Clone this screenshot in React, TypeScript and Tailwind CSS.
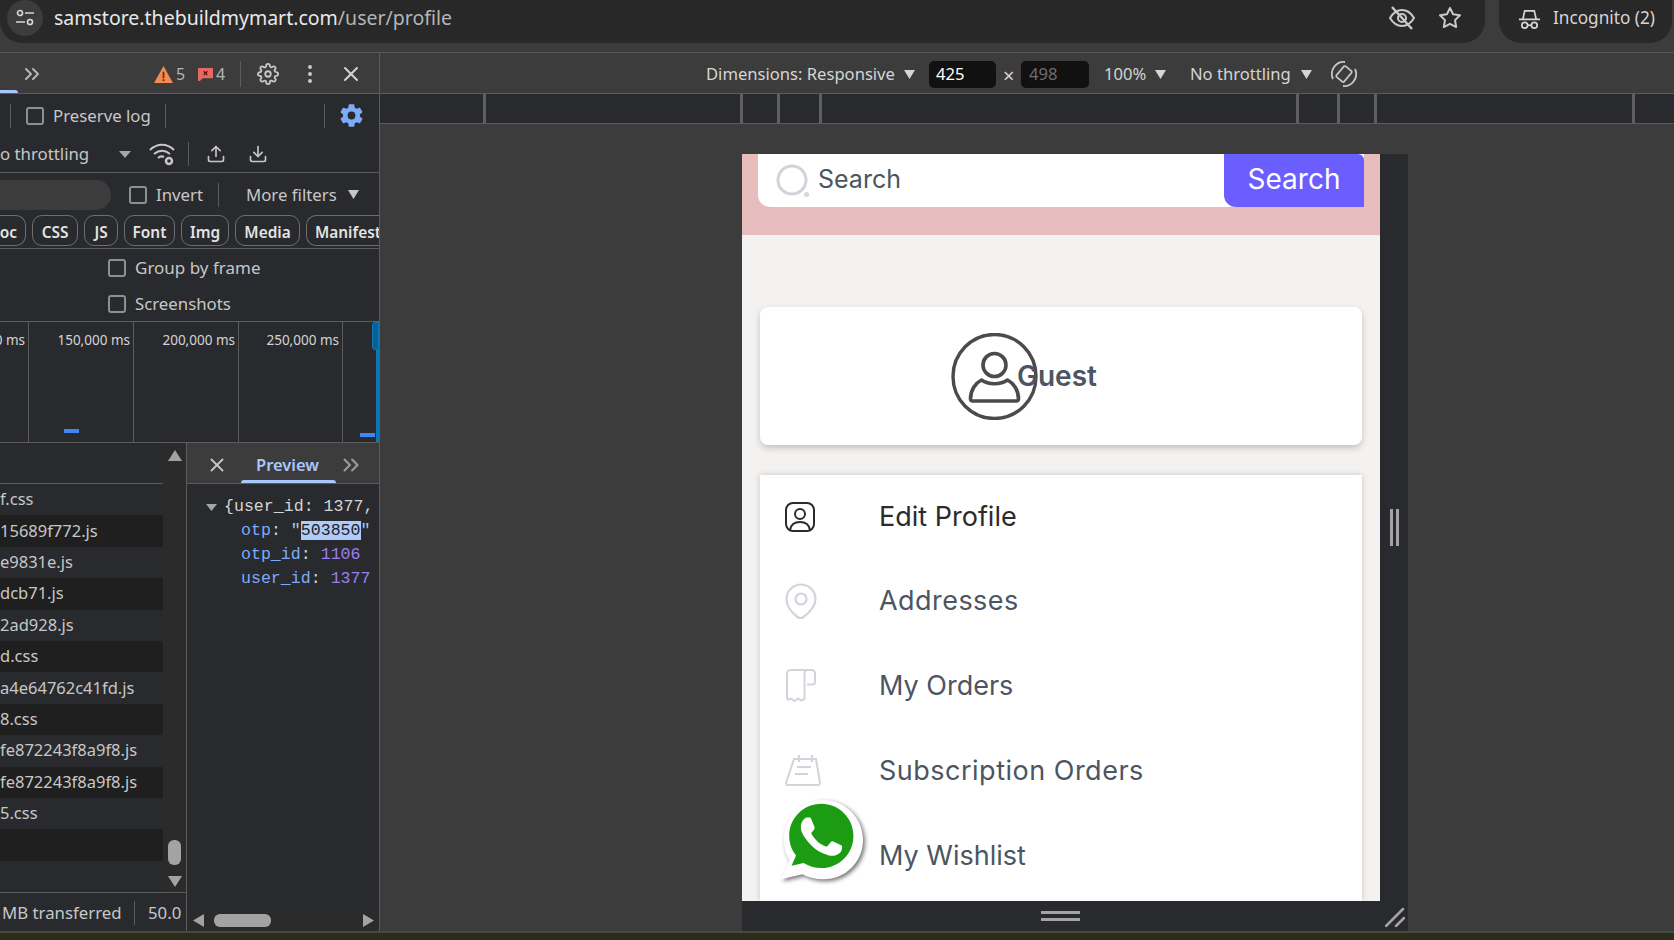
import React from 'react';
import { FiX, FiMoreVertical, FiChevronsRight, FiSettings, FiStar, FiUpload, FiDownload } from 'react-icons/fi';
import { IoSettingsSharp } from 'react-icons/io5';

const Caret = ({ className = 'w-[11px] h-[9px] text-[#c7c7c7]' }: { className?: string }) => (
  <svg viewBox="0 0 12 10" preserveAspectRatio="none" className={className}>
    <polygon points="0,0 12,0 6,10" fill="currentColor" />
  </svg>
);

const Check = () => <div className="w-[18px] h-[18px] shrink-0 rounded-[3px] border-2 border-[#8f8f8f]" />;
const Divider = ({ className = 'h-[24px]' }: { className?: string }) => <div className={`w-px shrink-0 bg-[#5c5c5c] ${className}`} />;

const chips = [
  { label: 'oc', className: 'w-[26px] rounded-r-[10px] border-l-0 justify-end pr-[8px]' },
  { label: 'CSS', className: 'w-[46px] ml-[6px] rounded-[10px] justify-center' },
  { label: 'JS', className: 'w-[34px] ml-[6px] rounded-[10px] justify-center' },
  { label: 'Font', className: 'w-[51px] ml-[6px] rounded-[10px] justify-center' },
  { label: 'Img', className: 'w-[48px] ml-[6px] rounded-[10px] justify-center' },
  { label: 'Media', className: 'w-[65px] ml-[6px] rounded-[10px] justify-center' },
  { label: 'Manifest', className: 'w-[73px] ml-[6px] rounded-l-[10px] border-r-0 pl-[8px]' },
];

const files = [
  'f.css',
  '15689f772.js',
  'e9831e.js',
  'dcb71.js',
  '2ad928.js',
  'd.css',
  'a4e64762c41fd.js',
  '8.css',
  'fe872243f8a9f8.js',
  'fe872243f8a9f8.js',
  '5.css',
  '',
  '',
];

const rulerTicks = ['w-[106px]', 'w-[257px]', 'w-[37px]', 'w-[42px]', 'w-[477px]', 'w-[41px]', 'w-[37px]', 'w-[258px]'];

const BrowserBar = () => (
  <div className="h-[53px] shrink-0 flex justify-between border-b border-[#565656] font-['Noto_Sans',sans-serif]">
    <div className="w-[1485px] h-[43px] bg-[#282828] rounded-b-[22px] flex items-center pl-[7px] pb-[7px]">
      <div className="w-[36px] h-[36px] rounded-full bg-[#3c3c3c] flex items-center justify-center">
        <svg viewBox="0 0 20 20" className="w-[20px] h-[20px]" fill="none" stroke="#d5d5d5" strokeWidth="1.7">
          <circle cx="5" cy="5" r="2.5" />
          <path d="M10 5h9M1 14h9" />
          <circle cx="15" cy="14" r="2.5" />
        </svg>
      </div>
      <div className="ml-[11px] text-[19.5px] whitespace-nowrap text-[#e8e8e8]">
        samstore.thebuildmymart.com<span className="text-[#b5b5b5]">/user/profile</span>
      </div>
      <div className="ml-auto flex items-center gap-[22px] pr-[23px]">
        <svg viewBox="0 0 28 24" className="w-[28px] h-[24px]" fill="none" stroke="#c9c9c9" strokeWidth="2">
          <path d="M2 12c3-5 7-8 12-8s9 3 12 8c-3 5-7 8-12 8S5 17 2 12z" />
          <circle cx="14" cy="12" r="4" />
          <path d="M4 1l20 22" strokeWidth="2.4" />
        </svg>
        <FiStar className="w-[24px] h-[24px] text-[#c9c9c9]" />
      </div>
    </div>
    <div className="w-[173px] h-[43px] mr-[2px] bg-[#282828] rounded-b-[22px] flex items-center pl-[19px] pb-[7px]">
      <svg viewBox="0 0 24 24" className="w-[23px] h-[23px]" fill="none" stroke="#d5d5d5" strokeWidth="1.8">
        <path d="M1 13h22M5 13l2-9h10l2 9" />
        <circle cx="7" cy="19" r="3" />
        <circle cx="17" cy="19" r="3" />
        <path d="M10 19h4" />
      </svg>
      <span className="ml-[12px] text-[17.2px] whitespace-nowrap text-[#d5d5d5]">Incognito (2)</span>
    </div>
  </div>
);

const NetworkToolbars = () => (
  <>
    <div className="h-[41px] shrink-0 relative flex items-center pt-[2px] border-b border-[#5c5c5c] bg-[#3c3c3c]">
      <div className="absolute left-0 bottom-0 w-[18px] h-[3px] rounded-tr-[3px] bg-[#a8c7fa]" />
      <FiChevronsRight className="ml-[20px] w-[24px] h-[24px] text-[#b5b5b5]" />
      <svg viewBox="0 0 20 18" className="ml-[110px] w-[19px] h-[17px]">
        <polygon points="10,0 20,18 0,18" fill="#f28b54" />
        <rect x="9" y="6" width="2" height="7" fill="#7a3300" />
        <rect x="9" y="14" width="2" height="2" fill="#7a3300" />
      </svg>
      <span className="ml-[3px] w-[22px] text-[16px] text-[#b5b5b5]">5</span>
      <svg viewBox="0 0 16 16" className="w-[15px] h-[15px]">
        <path d="M0 1h16v11H5l-3 3H0z" fill="#e46962" />
        <path d="M6 4.5l4 4M10 4.5l-4 4" stroke="#5c1010" strokeWidth="1.3" />
      </svg>
      <span className="ml-[3px] w-[24px] text-[16px] text-[#b5b5b5]">4</span>
      <Divider className="h-[26px]" />
      <FiSettings className="ml-[16px] w-[22px] h-[22px] text-[#c7c7c7]" />
      <FiMoreVertical className="ml-[19px] w-[24px] h-[24px] text-[#c7c7c7]" />
      <FiX className="ml-[17px] w-[24px] h-[24px] text-[#d5d5d5]" />
    </div>

    <div className="h-[41px] shrink-0 flex items-center pl-[10px] pt-[2px]">
      <Divider />
      <div className="ml-[15px]">
        <Check />
      </div>
      <span className="ml-[9px] w-[112px] text-[16.8px] text-[#c7c7c7]">Preserve log</span>
      <Divider />
      <Divider className="h-[24px] ml-[158px]" />
      <IoSettingsSharp className="ml-[14px] w-[25px] h-[25px] text-[#7cacf8]" />
    </div>

    <div className="h-[38px] shrink-0 flex items-center pt-[1px] border-b border-[#5c5c5c]">
      <span className="w-[119px] text-[16.8px] text-[#c7c7c7] whitespace-nowrap">o throttling</span>
      <Caret className="w-[12px] h-[7px] text-[#a5a5a5]" />
      <svg viewBox="0 0 26 24" className="ml-[18px] w-[26px] h-[24px]" fill="none" stroke="#c7c7c7" strokeWidth="2">
        <path d="M1 8c7-7 17-7 24 0M5 12c5-4 11-4 16 0M9 16c2-2 4-2 6-1" />
        <circle cx="20" cy="19" r="3" strokeWidth="2.5" />
      </svg>
      <div className="ml-[13px]">
        <Divider />
      </div>
      <FiUpload className="ml-[17px] w-[20px] h-[20px] text-[#c7c7c7]" />
      <FiDownload className="ml-[22px] w-[20px] h-[20px] text-[#c7c7c7]" />
    </div>

    <div className="h-[41px] shrink-0 flex items-center pt-[2px]">
      <div className="w-[111px] h-[30px] rounded-r-[15px] bg-[#3c3c3c]" />
      <div className="ml-[18px]">
        <Check />
      </div>
      <span className="ml-[9px] w-[62px] text-[16.8px] text-[#c7c7c7]">Invert</span>
      <Divider className="h-[24px]" />
      <span className="ml-[27px] w-[102px] text-[16.8px] text-[#c7c7c7] whitespace-nowrap">More filters</span>
      <Caret />
    </div>

    <div className="h-[35px] shrink-0 flex items-start pt-[1px] border-b border-[#5c5c5c] overflow-hidden">
      {chips.map((chip) => (
        <div
          key={chip.label}
          className={`h-[31px] shrink-0 flex items-center pt-[4px] border border-[#6e6e6e] text-[15.4px] font-semibold text-[#e3e3e3] whitespace-nowrap ${chip.className}`}
        >
          {chip.label}
        </div>
      ))}
    </div>

    <div className="h-[37px] shrink-0 flex items-center pl-[108px] pt-[1px]">
      <Check />
      <span className="ml-[9px] text-[17px] text-[#c7c7c7]">Group by frame</span>
    </div>
    <div className="h-[36px] shrink-0 flex items-center pl-[108px] pt-[1px] border-b border-[#5c5c5c]">
      <Check />
      <span className="ml-[9px] text-[16.8px] text-[#c7c7c7]">Screenshots</span>
    </div>
  </>
);

const Timeline = () => (
  <div className="h-[121px] shrink-0 flex border-b border-[#5c5c5c] relative text-[13.5px] text-[#d5d5d5] whitespace-nowrap">
    <div className="w-[29px] border-r border-[#5c5c5c] flex justify-end pr-[3px] pt-[8px] overflow-hidden">0 ms</div>
    <div className="w-[105px] border-r border-[#5c5c5c] flex justify-end pr-[3px] pt-[8px]">150,000 ms</div>
    <div className="w-[105px] border-r border-[#5c5c5c] flex justify-end pr-[3px] pt-[8px]">200,000 ms</div>
    <div className="w-[104px] border-r border-[#5c5c5c] flex justify-end pr-[3px] pt-[8px]">250,000 ms</div>
    <div className="absolute left-[64px] top-[107px] w-[15px] h-[4px] bg-[#4285f4]" />
    <div className="absolute left-[360px] top-[111px] w-[15px] h-[4px] bg-[#4285f4]" />
    <div className="absolute right-0 top-0 w-[3px] h-full bg-[#0b76b8]" />
    <div className="absolute right-0 top-0 w-[7px] h-[28px] rounded-l-[3px] bg-[#0b5f94] border border-[#0b76b8]" />
  </div>
);

const FileList = () => (
  <div className="w-[187px] shrink-0 flex flex-col border-r border-[#5c5c5c]">
    <div className="flex-1 flex min-h-0">
      <div className="w-[163px] flex flex-col bg-[#292a2d]">
        <div className="h-[41px] shrink-0 border-b border-[#5c5c5c]" />
        {files.map((file, index) => (
          <div
            key={index}
            className={`h-[31.4px] shrink-0 flex items-center text-[16.5px] text-[#c7c7c7] whitespace-nowrap ${index % 2 === 1 ? 'bg-[#1f1f1f]' : 'bg-[#292a2d]'}`}
          >
            {file}
          </div>
        ))}
      </div>
      <div className="flex-1 flex flex-col items-center pt-[7px] pb-[5px] bg-[#2b2b2b]">
        <svg viewBox="0 0 14 11" className="w-[14px] h-[11px]">
          <polygon points="7,0 14,11 0,11" fill="#a3a3a3" />
        </svg>
        <div className="mt-auto w-[13px] h-[25px] rounded-[6px] bg-[#a3a3a3]" />
        <svg viewBox="0 0 14 11" className="mt-[11px] w-[14px] h-[11px]">
          <polygon points="0,0 14,0 7,11" fill="#a3a3a3" />
        </svg>
      </div>
    </div>
    <div className="h-[39px] shrink-0 flex items-center pl-[2px] pt-[2px] border-t border-[#5c5c5c] text-[16.8px] text-[#c7c7c7] whitespace-nowrap">
      <span className="w-[132px]">MB transferred</span>
      <Divider />
      <span className="ml-[13px]">50.0</span>
    </div>
  </div>
);

const PreviewPane = () => (
  <div className="flex-1 flex flex-col min-w-0">
    <div className="h-[41px] shrink-0 relative flex items-center pt-[4px] bg-[#3c3c3c] border-b border-[#5c5c5c]">
      <FiX className="ml-[19px] w-[22px] h-[22px] text-[#c7c7c7]" />
      <span className="ml-[28px] text-[16.5px] font-semibold text-[#a8c7fa]">Preview</span>
      <FiChevronsRight className="ml-[19px] w-[26px] h-[26px] text-[#9a9a9a]" />
      <div className="absolute left-[54px] bottom-0 w-[95px] h-[3px] rounded-t-[3px] bg-[#a8c7fa]" />
    </div>
    <div className="flex-1 pt-[11px] pl-[19px] font-['Liberation_Mono',monospace] text-[16.6px] leading-[24px] whitespace-nowrap overflow-hidden text-[#d5d5d5]">
      <div className="flex items-center">
        <Caret className="w-[11px] h-[7px] text-[#a5a5a5]" />
        <span className="ml-[7px]">{'{user_id: 1377,'}</span>
      </div>
      <div className="pl-[35px]">
        <span className="text-[#7cacf8]">otp</span>: <span className="text-[#a8c7fa]">"</span>
        <span className="bg-[#aecbfa] text-[#1f1f1f]">503850</span>
        <span className="text-[#a8c7fa]">"</span>
      </div>
      <div className="pl-[35px]">
        <span className="text-[#7cacf8]">otp_id</span>: <span className="text-[#9a7ff0]">1106</span>
      </div>
      <div className="pl-[35px]">
        <span className="text-[#7cacf8]">user_id</span>: <span className="text-[#9a7ff0]">1377</span>
      </div>
    </div>
    <div className="h-[21px] shrink-0 flex items-center pl-[6px] bg-[#2b2b2b]">
      <svg viewBox="0 0 11 13" className="w-[11px] h-[13px]">
        <polygon points="11,0 11,13 0,6.5" fill="#a3a3a3" />
      </svg>
      <div className="ml-[10px] w-[57px] h-[13px] rounded-[6px] bg-[#a3a3a3]" />
      <svg viewBox="0 0 11 13" className="ml-[92px] w-[11px] h-[13px]">
        <polygon points="0,0 11,6.5 0,13" fill="#a3a3a3" />
      </svg>
    </div>
  </div>
);

const Devtools = () => (
  <div className="w-[380px] shrink-0 flex flex-col bg-[#292a2d] border-r border-[#5c5c5c] overflow-hidden">
    <NetworkToolbars />
    <Timeline />
    <div className="flex-1 flex min-h-0">
      <FileList />
      <PreviewPane />
    </div>
  </div>
);

const EmulationBar = () => (
  <div className="h-[41px] shrink-0 flex items-center pl-[326px] pt-[2px] border-b border-[#5c5c5c] text-[16.6px] text-[#d5d5d5] whitespace-nowrap">
    <span className="w-[189px] pt-[1px]">Dimensions: Responsive</span>
    <Caret className="ml-[9px] w-[11px] h-[9px] text-[#d5d5d5]" />
    <div className="ml-[14px] w-[67px] h-[27px] rounded-[5px] bg-[#111111] flex items-center pl-[7px] text-white">425</div>
    <span className="mx-[7px] w-[11px] pt-[3px] text-center text-[20px] leading-none text-[#d5d5d5]">×</span>
    <div className="w-[68px] h-[27px] rounded-[5px] bg-[#111111] flex items-center pl-[8px] text-[#6f6f6f]">498</div>
    <span className="ml-[15px] w-[44px] pt-[1px]">100%</span>
    <Caret className="ml-[7px] w-[11px] h-[9px] text-[#d5d5d5]" />
    <span className="ml-[24px] w-[103px] pt-[1px]">No throttling</span>
    <Caret className="ml-[8px] w-[11px] h-[9px] text-[#d5d5d5]" />
    <svg viewBox="0 0 26 26" className="ml-[19px] w-[26px] h-[26px]" fill="none" stroke="#c7c7c7" strokeWidth="1.8">
      <rect x="8" y="6" width="10" height="14" rx="1.5" transform="rotate(40 13 13)" />
      <path d="M2 18A12 12 0 0 1 14 1M24 8A12 12 0 0 1 12 25" />
    </svg>
  </div>
);

const SearchBand = () => (
  <div className="h-[81px] shrink-0 bg-[#e6bcbc] px-[16px]">
    <div className="h-[53px] flex bg-white rounded-bl-[12px]">
      <div className="flex-1 flex items-center pl-[18px]">
        <svg viewBox="0 0 34 34" className="w-[34px] h-[34px]" fill="none" stroke="#d1d5db" strokeWidth="3">
          <circle cx="16" cy="16" r="14" />
          <circle cx="30.5" cy="30.5" r="1.5" strokeWidth="2" />
        </svg>
        <span className="ml-[8px] pb-[1px] text-[25px] text-[#4b5563]">Search</span>
      </div>
      <div className="w-[140px] flex items-center justify-center pb-[3px] rounded-bl-[12px] rounded-tr-[6px] bg-[#6a5eff] text-[28px] text-white">
        Search
      </div>
    </div>
  </div>
);

const AvatarIcon = () => (
  <svg viewBox="0 0 86 87" className="w-[87px] h-[87px] shrink-0" fill="none" stroke="#4b4b4b">
    <ellipse cx="43" cy="43.5" rx="41.5" ry="42" strokeWidth="3.4" />
    <circle cx="43" cy="32" r="11.5" strokeWidth="3.6" />
    <path d="M30 47c7 5 19 5 26 0 6 3 11 10 11 19 0 1-1 2-2 2H21c-1 0-2-1-2-2 0-9 5-16 11-19z" strokeWidth="3.6" strokeLinejoin="round" />
  </svg>
);

const EditIcon = () => (
  <svg viewBox="0 0 30 30" className="w-[30px] h-[30px]" fill="none" stroke="#2b2b2b" strokeWidth="2">
    <rect x="1" y="1" width="28" height="28" rx="7" />
    <circle cx="15" cy="12" r="5" />
    <path d="M5 28c1-6 5-8 10-8s9 2 10 8" />
  </svg>
);

const PinIcon = () => (
  <svg viewBox="0 0 32 36" className="w-[32px] h-[36px] -mt-[3px]" fill="none" stroke="#d1d5db" strokeWidth="2.2">
    <path d="M16 1.5C8 1.5 1.5 8 1.5 16c0 8 7 15 11 18 2 1.5 4 1.5 6 0 4-3 12-10 12-18 0-8-6.5-14.500-14.500-14.500z" />
    <circle cx="16" cy="16" r="5.5" />
  </svg>
);

const ReceiptIcon = () => (
  <svg viewBox="0 0 32 34" className="w-[32px] h-[34px] -mt-[3px]" fill="none" stroke="#d1d5db" strokeWidth="2">
    <path d="M2 31V6c0-2.5 1.5-4 4-4h20c2.500 0 4 1.5 4 4v8c0 1.5-1 2.5-2.500 2.500H22" />
    <path d="M22 2c-1.5 0-2.5 1.5-2.5 4v25l-3 1.5-3.5-2-3.500 2.500-3.500-2.500L2 32" />
  </svg>
);

const CalendarIcon = () => (
  <svg viewBox="0 0 36 32" className="w-[36px] h-[32px] -mt-[3px]" fill="none" stroke="#d1d5db" strokeWidth="2">
    <path d="M9 5h22l4 24c0 1-1 2-2 2H3c-1 0-2-1-2-2z" />
    <path d="M14 1v7M27 1v7M12 13h14M10 20h13" />
  </svg>
);

const WhatsappBadge = () => (
  <svg viewBox="0 0 24 24" className="absolute left-[39px] top-[643px] w-[82px] h-[84px] drop-shadow-[2px_2px_2px_rgba(0,0,0,0.55)]">
    <path d="M12.500.6C6 .6.8 5.800.8 12.300c0 2.200.6 4.300 1.700 6.100L0 23.800l6.300-1.500c1.800 1 3.900 1.500 6.200 1.500 6.400 0 11.500-5.100 11.500-11.500S18.900.6 12.500.6z" fill="#ffffff" />
    <g transform="translate(-1 -0.6)">
      <path d="M12.800 2.300c-5.200 0-9.400 4.200-9.400 9.400 0 2.100.7 4.100 2 5.700l-1.300 3 3.500-.8c1.500.9 3.300 1.500 5.200 1.500 5.200 0 9.400-4.200 9.400-9.400s-4.200-9.400-9.400-9.400z" fill="#1c9c12" />
      <path
        transform="translate(0.8 -0.1)"
        d="M17.472 14.382c-.297-.149-1.758-.867-2.03-.967-.273-.099-.471-.148-.67.15-.197.297-.767.966-.94 1.164-.173.199-.347.223-.644.075-.297-.15-1.255-.463-2.39-1.475-.883-.788-1.48-1.761-1.653-2.059-.173-.297-.018-.458.13-.606.134-.133.298-.347.446-.52.149-.174.198-.298.298-.497.099-.198.05-.371-.025-.52-.075-.149-.669-1.612-.916-2.207-.242-.579-.487-.5-.669-.51-.173-.008-.371-.01-.57-.01-.198 0-.52.074-.792.372-.272.297-1.04 1.016-1.04 2.479 0 1.462 1.065 2.875 1.213 3.074.149.198 2.096 3.2 5.077 4.487.709.306 1.262.489 1.694.625.712.227 1.36.195 1.871.118.571-.085 1.758-.719 2.006-1.413.248-.694.248-1.289.173-1.413-.074-.124-.272-.198-.57-.347z"
        fill="#ffffff"
      />
    </g>
  </svg>
);

const menu = [
  { label: 'Edit Profile', icon: <EditIcon />, className: 'text-[#2b2b2b]' },
  { label: 'Addresses', icon: <PinIcon />, className: 'text-[#4b5563] tracking-[0.45px]' },
  { label: 'My Orders', icon: <ReceiptIcon />, className: 'text-[#4b5563]' },
  { label: 'Subscription Orders', icon: <CalendarIcon />, className: 'text-[#4b5563] tracking-[0.5px]' },
  { label: 'My Wishlist', icon: null, className: 'text-[#4b5563]' },
];

const PhoneScreen = () => (
  <div className="w-[638px] h-[747px] shrink-0 relative flex flex-col bg-[#f3f2f0] overflow-hidden font-[Inter,sans-serif]">
    <SearchBand />
    <div className="mt-[72px] mx-[18px] h-[138px] shrink-0 flex items-center pl-[191px] bg-white rounded-[8px] shadow-[0_3px_6px_rgba(0,0,0,0.2)]">
      <AvatarIcon />
      <span className="-ml-[21px] text-[28px] font-semibold text-[#4b5563]">Guest</span>
    </div>
    <div className="mt-[30px] mx-[18px] flex-1 flex flex-col bg-white shadow-[0_0_6px_rgba(0,0,0,0.18)]">
      {menu.map((item) => (
        <div key={item.label} className="h-[84.8px] shrink-0 flex items-center pl-[25px]">
          <div className="w-[94px] shrink-0">{item.icon}</div>
          <span className={`text-[27px] -mt-[1px] whitespace-nowrap ${item.className}`}>{item.label}</span>
        </div>
      ))}
    </div>
    <WhatsappBadge />
  </div>
);

const Emulator = () => (
  <div className="flex-1 flex flex-col min-w-0">
    <EmulationBar />
    <div className="h-[30px] shrink-0 flex bg-[#292a2d] border-b border-[#5c5c5c]">
      {rulerTicks.map((width, index) => (
        <div key={index} className={`h-full shrink-0 border-r-[3px] border-[#5f5f5f] ${width}`} />
      ))}
    </div>
    <div className="mt-[30px] ml-[362px] flex">
      <PhoneScreen />
      <div className="w-[28px] h-[747px] shrink-0 flex items-center justify-center gap-[3px] bg-[#292a2d]">
        <div className="w-[3px] h-[37px] bg-[#a3a3a3]" />
        <div className="w-[3px] h-[37px] bg-[#a3a3a3]" />
      </div>
    </div>
    <div className="ml-[362px] w-[666px] h-[30px] relative flex flex-col items-start pl-[299px] justify-center gap-[4px] bg-[#292a2d]">
      <div className="w-[39px] h-[3px] bg-[#a3a3a3]" />
      <div className="w-[39px] h-[3px] bg-[#a3a3a3]" />
      <svg viewBox="0 0 20 20" className="absolute right-[3px] top-[6px] w-[20px] h-[20px]" stroke="#a3a3a3" strokeWidth="2.5" strokeLinecap="round">
        <path d="M1 19L18 2M11 19l8-8" />
      </svg>
    </div>
  </div>
);

export default function App() {
  return (
    <div className="w-[1674px] h-[940px] flex flex-col bg-[#3c3c3c] overflow-hidden font-['Noto_Sans',sans-serif]">
      <BrowserBar />
      <div className="h-[878px] shrink-0 flex">
        <Devtools />
        <Emulator />
      </div>
      <div className="flex-1 bg-[#2a2d1a] border-t-2 border-[#474b3a]" />
    </div>
  );
}
